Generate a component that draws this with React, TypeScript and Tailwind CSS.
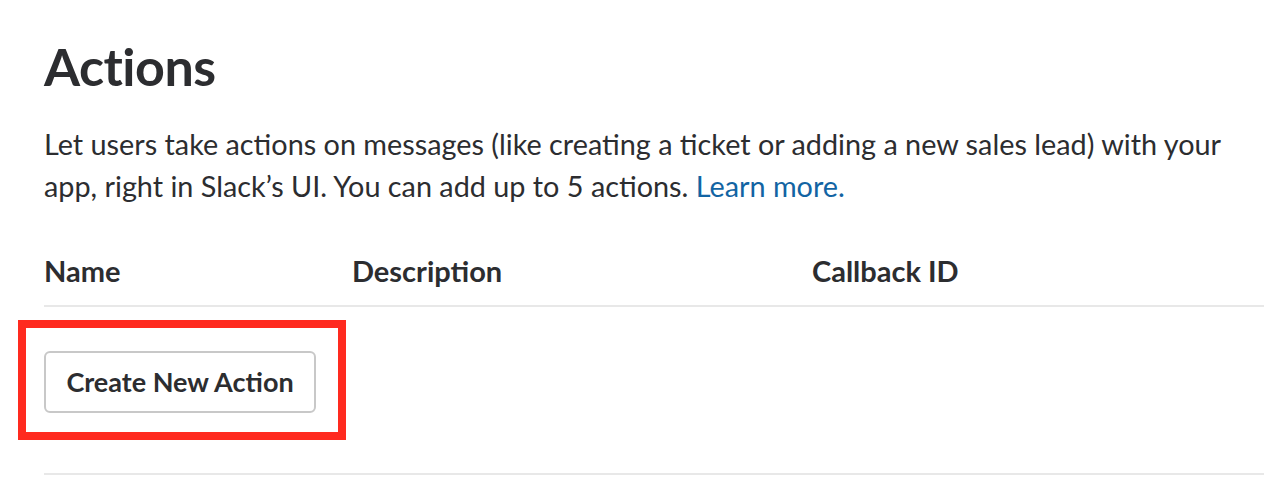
import React from 'react';

export default function App() {
  return (
    <div className="min-h-screen bg-white text-[#2c2d30] font-['Lato','Liberation_Sans',sans-serif]">
      <div className="pl-[44px] pr-[18px] pt-[38px]">
        <h1 className="text-[52px] font-bold leading-[56px] tracking-[-0.5px]">Actions</h1>

        <p className="mt-[29px] text-[28.8px] leading-[42px]">
          Let users take actions on messages (like creating a ticket or adding a new sales lead) with your
          <br />
          app, right in Slack&rsquo;s UI. You can add up to 5 actions.{' '}
          <a href="#" className="text-[#1264a3]">Learn more.</a>
        </p>

        <div className="mt-[48px] grid grid-cols-[308px_460px_1fr] border-b-2 border-[#e8e8e8] pb-[18px] text-[29px] font-bold leading-[32px]">
          <div>Name</div>
          <div>Description</div>
          <div>Callback ID</div>
        </div>

        <div className="border-b-2 border-[#e8e8e8] pt-[44px] pb-[60px]">
          <div className="relative inline-block">
            <button className="h-[62px] w-[272px] rounded-[6px] border-2 border-[#c8c8c8] bg-white text-[27px] font-bold text-[#2c2d30]">
              Create New Action
            </button>
            <div className="pointer-events-none absolute -left-[26px] -top-[31px] -right-[30px] -bottom-[27px] border-[8px] border-[#ff2a1f]" />
          </div>
        </div>
      </div>
    </div>
  );
}
